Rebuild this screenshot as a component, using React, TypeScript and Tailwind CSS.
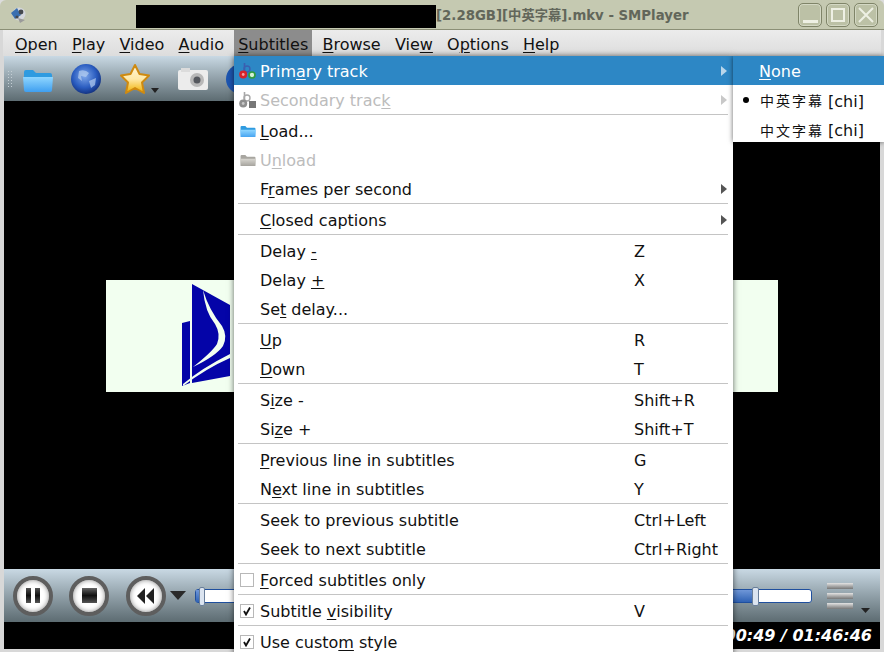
import { FC, ReactNode } from "react";

type Row =
  | { sep: true }
  | {
      sep?: false;
      label: string; // & marks the mnemonic letter
      shortcut?: string;
      icon?: ReactNode;
      arrow?: boolean;
      disabled?: boolean;
      active?: boolean;
    };

const Mnemonic: FC<{ label: string }> = ({ label }) => {
  const i = label.indexOf("&");
  if (i < 0) return <>{label}</>;
  return (
    <>
      {label.slice(0, i)}
      <u className="underline underline-offset-[2px] decoration-1">{label[i + 1]}</u>
      {label.slice(i + 2)}
    </>
  );
};

const FolderIcon: FC<{ size: number; gray?: boolean }> = ({ size, gray }) => (
  <svg width={size} height={size * 0.8} viewBox="0 0 30 24">
    <defs>
      <linearGradient id={gray ? "fg" : "fb"} x1="0" y1="0" x2="0" y2="1">
        <stop offset="0" stopColor={gray ? "#d8d6d0" : "#8fd6ff"} />
        <stop offset="1" stopColor={gray ? "#a09e98" : "#3f9ff0"} />
      </linearGradient>
    </defs>
    <path d="M1 4 Q1 2 3 2 H10 L13 5 H27 Q29 5 29 7 V10 H1 Z" fill={gray ? "#a8a6a0" : "#2f9be0"} />
    <path d="M0 9 H30 L29 22 Q29 24 27 24 H3 Q1 24 1 22 Z" fill={`url(#${gray ? "fg" : "fb"})`} />
  </svg>
);

const AbcIcon: FC<{ gray?: boolean }> = ({ gray }) => (
  <svg width="17" height="16" viewBox="0 0 17 16" className="-ml-[1px]">
    <path d="M5.5 0 V9" stroke={gray ? "#a8a8a8" : "#3a5fb0"} strokeWidth="1.6" fill="none" />
    <circle cx="8" cy="6" r="3" stroke={gray ? "#a8a8a8" : "#3a5fb0"} strokeWidth="1.4" fill="none" />
    <circle cx="4.2" cy="11.5" r="4" fill={gray ? "#8e8e8e" : "#d8222a"} />
    <circle cx="4.2" cy="11.5" r="1.4" fill={gray ? "#c8c8c8" : "#f5a0a0"} />
    {gray ? (
      <rect x="10" y="9" width="7" height="7" fill="#777" />
    ) : (
      <circle cx="13" cy="12" r="3" stroke="#2f9b3f" strokeWidth="1.7" fill="#d5f0d5" />
    )}
  </svg>
);

const CheckBox: FC<{ checked?: boolean }> = ({ checked }) => (
  <span className="w-[14px] h-[14px] border border-[#b8b8b8] bg-white flex items-center justify-center">
    {checked && (
      <svg width="10" height="10" viewBox="0 0 10 10">
        <path d="M2 5 L4 8.5 L8 1.5" stroke="#111" strokeWidth="1.8" fill="none" />
      </svg>
    )}
  </span>
);

const rows: Row[] = [
  { label: "Prim&ary track", arrow: true, active: true, icon: <AbcIcon /> },
  { label: "Secondary trac&k", arrow: true, disabled: true, icon: <AbcIcon gray /> },
  { sep: true },
  { label: "&Load...", icon: <FolderIcon size={16} /> },
  { label: "U&nload", disabled: true, icon: <FolderIcon size={16} gray /> },
  { label: "F&rames per second", arrow: true },
  { sep: true },
  { label: "&Closed captions", arrow: true },
  { sep: true },
  { label: "Delay &-", shortcut: "Z" },
  { label: "Delay &+", shortcut: "X" },
  { label: "Se&t delay..." },
  { sep: true },
  { label: "&Up", shortcut: "R" },
  { label: "&Down", shortcut: "T" },
  { sep: true },
  { label: "S&ize -", shortcut: "Shift+R" },
  { label: "Si&ze +", shortcut: "Shift+T" },
  { sep: true },
  { label: "&Previous line in subtitles", shortcut: "G" },
  { label: "N&ext line in subtitles", shortcut: "Y" },
  { sep: true },
  { label: "Seek to previous subtitle", shortcut: "Ctrl+Left" },
  { label: "Seek to next subtitle", shortcut: "Ctrl+Right" },
  { sep: true },
  { label: "&Forced subtitles only", icon: <CheckBox /> },
  { sep: true },
  { label: "Subtitle &visibility", shortcut: "V", icon: <CheckBox checked /> },
  { sep: true },
  { label: "Use custo&m style", icon: <CheckBox checked /> },
];

const menuBar = ["&Open", "&Play", "&Video", "&Audio", "&Subtitles", "&Browse", "Vie&w", "O&ptions", "&Help"];

const RoundButton: FC<{ children: ReactNode }> = ({ children }) => (
  <div className="w-[40px] h-[40px] rounded-full border-[4px] border-[#5e5e5e] bg-white flex items-center justify-center shadow-[inset_0_0_5px_rgba(0,0,0,0.45)]">
    {children}
  </div>
);

const WinButton: FC<{ children: ReactNode }> = ({ children }) => (
  <div className="w-[24px] h-[24px] rounded-[5px] border border-[#7f8468] bg-[#bcc1a6] shadow-[inset_0_0_0_1px_#d4d8c4] flex items-center justify-center">
    {children}
  </div>
);

const Arrow: FC<{ color: string }> = ({ color }) => (
  <svg width="6" height="10" viewBox="0 0 6 10" className="absolute right-[6px] top-[10px]">
    <path d="M0 0 L6 5 L0 10 Z" fill={color} />
  </svg>
);

const App: FC = () => {
  return (
    <div className="relative w-[884px] h-[652px] overflow-hidden flex flex-col bg-[#dcdcdc] font-['DejaVu_Sans',sans-serif] text-[16px] text-[#111]">
      {/* title bar */}
      <div className="h-[30px] shrink-0 flex items-center bg-[#c5c9b1] border-b border-[#8b8f76] rounded-t-[6px] relative">
        <svg width="18" height="18" viewBox="0 0 18 18" className="ml-[10px] mt-[1px]">
          <circle cx="9" cy="8" r="6.5" fill="#d4d7dc" />
          <path d="M1 7 L7 2 L11 9 L5 13 Z" fill="#3a6fb0" />
          <circle cx="11" cy="6" r="2.4" fill="#44484e" />
          <circle cx="7" cy="11" r="1.6" fill="#44484e" />
          <path d="M8 12 L15 14 L10 17 Z" fill="#9a9a9a" />
        </svg>
        <div className="w-[300px] h-[23px] bg-black ml-[108px] mt-[4px]" />
        <span className="font-bold text-[13.3px] mt-[2px] text-[#62665a] font-['DejaVu_Sans','Noto_Sans_CJK_SC',sans-serif]">
          [2.28GB][中英字幕].mkv - SMPlayer
        </span>
        <div className="ml-auto mr-[6px] flex gap-[4px]">
          <WinButton>
            <div className="w-[15px] h-[3px] bg-[#eef0e4] mt-[13px]" />
          </WinButton>
          <WinButton>
            <div className="w-[14px] h-[14px] border-[2px] border-[#eef0e4]" />
          </WinButton>
          <WinButton>
            <svg width="16" height="16" viewBox="0 0 16 16">
              <path d="M1 1 L15 15 M15 1 L1 15" stroke="#eef0e4" strokeWidth="2" />
            </svg>
          </WinButton>
        </div>
      </div>

      <div className="flex-1 flex flex-col px-[4px] min-h-0 bg-[#d8d8d8]">
        {/* menu bar */}
        <div className="h-[26px] shrink-0 -mx-[1px] flex items-center gap-[6.2px] pl-[8px] bg-gradient-to-b from-[#ececec] to-[#dddddd]">
          {menuBar.map((m) => (
            <div
              key={m}
              className={`px-[4px] h-[26px] pt-[4px] flex items-center ${m === "&Subtitles" ? "bg-[#8c8c8c]" : ""}`}
            >
              <span><Mnemonic label={m} /></span>
            </div>
          ))}
        </div>

        {/* toolbar */}
        <div className="h-[45px] shrink-0 flex items-center bg-gradient-to-b from-[#c9d9e4] to-[#5d6c72]">
          <div className="w-[6px] h-[18px] ml-[3px] mt-[1px] bg-[radial-gradient(#c4ced4_1px,transparent_1px)] bg-[length:3px_3px]" />
          <div className="ml-[10px] mt-[2px]">
            <FolderIcon size={30} />
          </div>
          <svg width="32" height="32" viewBox="0 0 32 32" className="ml-[17px]">
            <defs>
              <radialGradient id="globe" cx="0.45" cy="0.4" r="0.65">
                <stop offset="0" stopColor="#7fa8ea" />
                <stop offset="0.6" stopColor="#2a5cc0" />
                <stop offset="1" stopColor="#0f2a74" />
              </radialGradient>
            </defs>
            <circle cx="16" cy="16" r="15" fill="url(#globe)" />
            <path d="M9 8 Q15 6 19 10 L16 14 L11 13 L12 18 L8 15 Z M19 18 L26 15 L25 22 L21 25 Z" fill="#b6cff0" opacity="0.7" />
          </svg>
          <svg width="32" height="32" viewBox="0 0 32 32" className="ml-[17px]">
            <defs>
              <linearGradient id="star" x1="0" y1="0" x2="0" y2="1">
                <stop offset="0" stopColor="#fff6d8" />
                <stop offset="0.5" stopColor="#ffe9a8" />
                <stop offset="1" stopColor="#f0b000" />
              </linearGradient>
            </defs>
            <path
              d="M16 2 L20.5 11 L30 12.5 L23 19.5 L25 30 L16 25 L7 30 L9 19.5 L2 12.5 L11.5 11 Z"
              fill="url(#star)"
              stroke="#cf8a10"
              strokeWidth="2"
              strokeLinejoin="round"
            />
          </svg>
          <svg width="8" height="5" viewBox="0 0 8 5" className="mt-[24px]">
            <path d="M0 0 H8 L4 5 Z" fill="#222" />
          </svg>
          <svg width="32" height="26" viewBox="0 0 32 26" className="ml-[18px]">
            <rect x="1" y="4" width="30" height="20" rx="2" fill="#ececec" />
            <rect x="4" y="2" width="9" height="4" fill="#dcdcdc" />
            <circle cx="20" cy="14" r="7" fill="#b8b8b8" />
            <circle cx="20" cy="14" r="3.5" fill="#55585e" />
          </svg>
          <div className="ml-[17px] w-[30px] h-[30px] rounded-full bg-[#1d55b0]" />
        </div>

        {/* video area */}
        <div className="flex-1 min-h-0 bg-black flex items-center justify-center">
          <div className="w-[672px] h-[112px] bg-[#f2fff0] relative mt-[2px]">
            <svg width="50" height="104" viewBox="0 0 50 104" className="absolute left-[76px] top-[4px]">
              <path d="M10 0 L48 21 L48 92 L10 99 Z" fill="#0404a8" />
              <path d="M0 39 L8 37 L8 99 L0 102 Z" fill="#0404a8" />
              <path d="M21 6 Q23 28 33 40 Q39 50 35 60 Q30 68 11 83 Q34 72 41 62 Q46 52 40 42 Q27 26 21 6 Z" fill="#f2fff0" />
              <path d="M1 100 Q20 84 48 70 L48 74 Q25 84 1 102 Z" fill="#f2fff0" />
            </svg>
          </div>
        </div>

        {/* control bar */}
        <div className="h-[53px] shrink-0 flex items-center bg-gradient-to-b from-[#c9d9e4] to-[#5d6c72] relative">
          <div className="ml-[9px]">
            <RoundButton>
              <div className="flex gap-[4px]">
                <div className="w-[5px] h-[15px] bg-gradient-to-b from-[#555] via-[#111] to-[#555]" />
                <div className="w-[5px] h-[15px] bg-gradient-to-b from-[#555] via-[#111] to-[#555]" />
              </div>
            </RoundButton>
          </div>
          <div className="ml-[16px]">
            <RoundButton>
              <div className="w-[15px] h-[15px] bg-gradient-to-b from-[#666] via-[#111] to-[#555]" />
            </RoundButton>
          </div>
          <div className="ml-[17px]">
            <RoundButton>
              <svg width="20" height="16" viewBox="0 0 20 16">
                <path d="M9 0 V16 L1 8 Z M18 0 V16 L10 8 Z" fill="#222" />
              </svg>
            </RoundButton>
          </div>
          <svg width="16" height="9" viewBox="0 0 16 9" className="ml-[4px]">
            <path d="M0 0 H16 L8 9 Z" fill="#2a2a2a" />
          </svg>
          {/* seek slider */}
          <div className="ml-[9px] w-[400px] h-[14px] rounded-[3px] border border-[#1f4f9e] bg-white relative">
            <div className="absolute inset-y-0 left-0 w-[4px] bg-gradient-to-b from-[#6f97d8] to-[#2f62b4]" />
            <div className="absolute left-[3px] -top-[3px] w-[6px] h-[19px] rounded-[2px] bg-[#dbe4f0] border border-[#6a7f9a]" />
          </div>
          {/* volume slider */}
          <div className="ml-[15px] w-[202px] h-[14px] rounded-[3px] border border-[#1f4f9e] bg-white relative">
            <div className="absolute inset-y-0 left-0 w-[145px] bg-gradient-to-b from-[#6f97d8] to-[#2f62b4]" />
            <div className="absolute left-[141px] -top-[3px] w-[7px] h-[19px] rounded-[2px] bg-[#dbe4f0] border border-[#6a7f9a]" />
          </div>
          <div className="ml-[15px] mt-[1px] flex flex-col gap-[4px]">
            <div className="w-[26px] h-[6px] bg-gradient-to-b from-[#e4e4e4] to-[#777]" />
            <div className="w-[26px] h-[6px] bg-gradient-to-b from-[#e4e4e4] to-[#777]" />
            <div className="w-[26px] h-[6px] bg-gradient-to-b from-[#e4e4e4] to-[#777]" />
          </div>
          <svg width="9" height="5" viewBox="0 0 9 5" className="ml-[8px] mt-[30px]">
            <path d="M0 0 H9 L4.5 5 Z" fill="#222" />
          </svg>
        </div>

        {/* time */}
        <div className="h-[27px] shrink-0 bg-black flex items-center justify-end pr-[8px] pt-[1px]">
          <span className="font-bold italic text-[16px] text-white">00:00:49 / 01:46:46</span>
        </div>
        <div className="h-[3px] shrink-0" />
      </div>

      {/* subtitles menu */}
      <div className="absolute left-[234px] top-[56px] w-[499px] bg-white shadow-[0_0_6px_rgba(0,0,0,0.6)]">
        {rows.map((r, idx) =>
          r.sep ? (
            <div key={idx} className="h-[2px] ml-[4px] mr-[5px] bg-gradient-to-b from-[#c4c4c4] from-50% to-white to-50%" />
          ) : (
            <div
              key={idx}
              className={`h-[29px] relative flex items-center pl-[26px] pt-[2px] ${
                r.active ? "bg-[#2d87c5] text-white" : r.disabled ? "text-[#bcbcbc]" : ""
              }`}
            >
              <span className="absolute left-[6px] top-[7px] w-[16px] h-[16px] flex items-center justify-start">{r.icon}</span>
              <span><Mnemonic label={r.label} /></span>
              {r.shortcut && <span className="absolute left-[400px]">{r.shortcut}</span>}
              {r.arrow && <Arrow color={r.active ? "#b9d6ea" : r.disabled ? "#c8c8c8" : "#555555"} />}
            </div>
          ),
        )}
      </div>

      {/* primary track submenu */}
      <div className="absolute left-[733px] top-[56px] w-[151px] h-[86px] overflow-hidden bg-white shadow-[0_0_5px_rgba(0,0,0,0.6)] font-['DejaVu_Sans','Noto_Sans_CJK_SC',sans-serif]">
        <div className="h-[29px] flex items-center pl-[26px] pt-[2px] bg-[#2d87c5] text-white">
          <span><Mnemonic label="&None" /></span>
        </div>
        <div className="h-[29px] flex items-center pl-[27px] pt-[4px] relative">
          <span className="absolute left-[10px] top-[12px] w-[6px] h-[6px] rounded-full bg-black" />
          <span className="text-[14px] tracking-[2px]">中英字幕</span>
          <span className="ml-[4px]">[chi]</span>
        </div>
        <div className="h-[29px] flex items-center pl-[27px] pt-[5px]">
          <span className="text-[14px] tracking-[2px]">中文字幕</span>
          <span className="ml-[4px]">[chi]</span>
        </div>
      </div>
    </div>
  );
};

export default App;
